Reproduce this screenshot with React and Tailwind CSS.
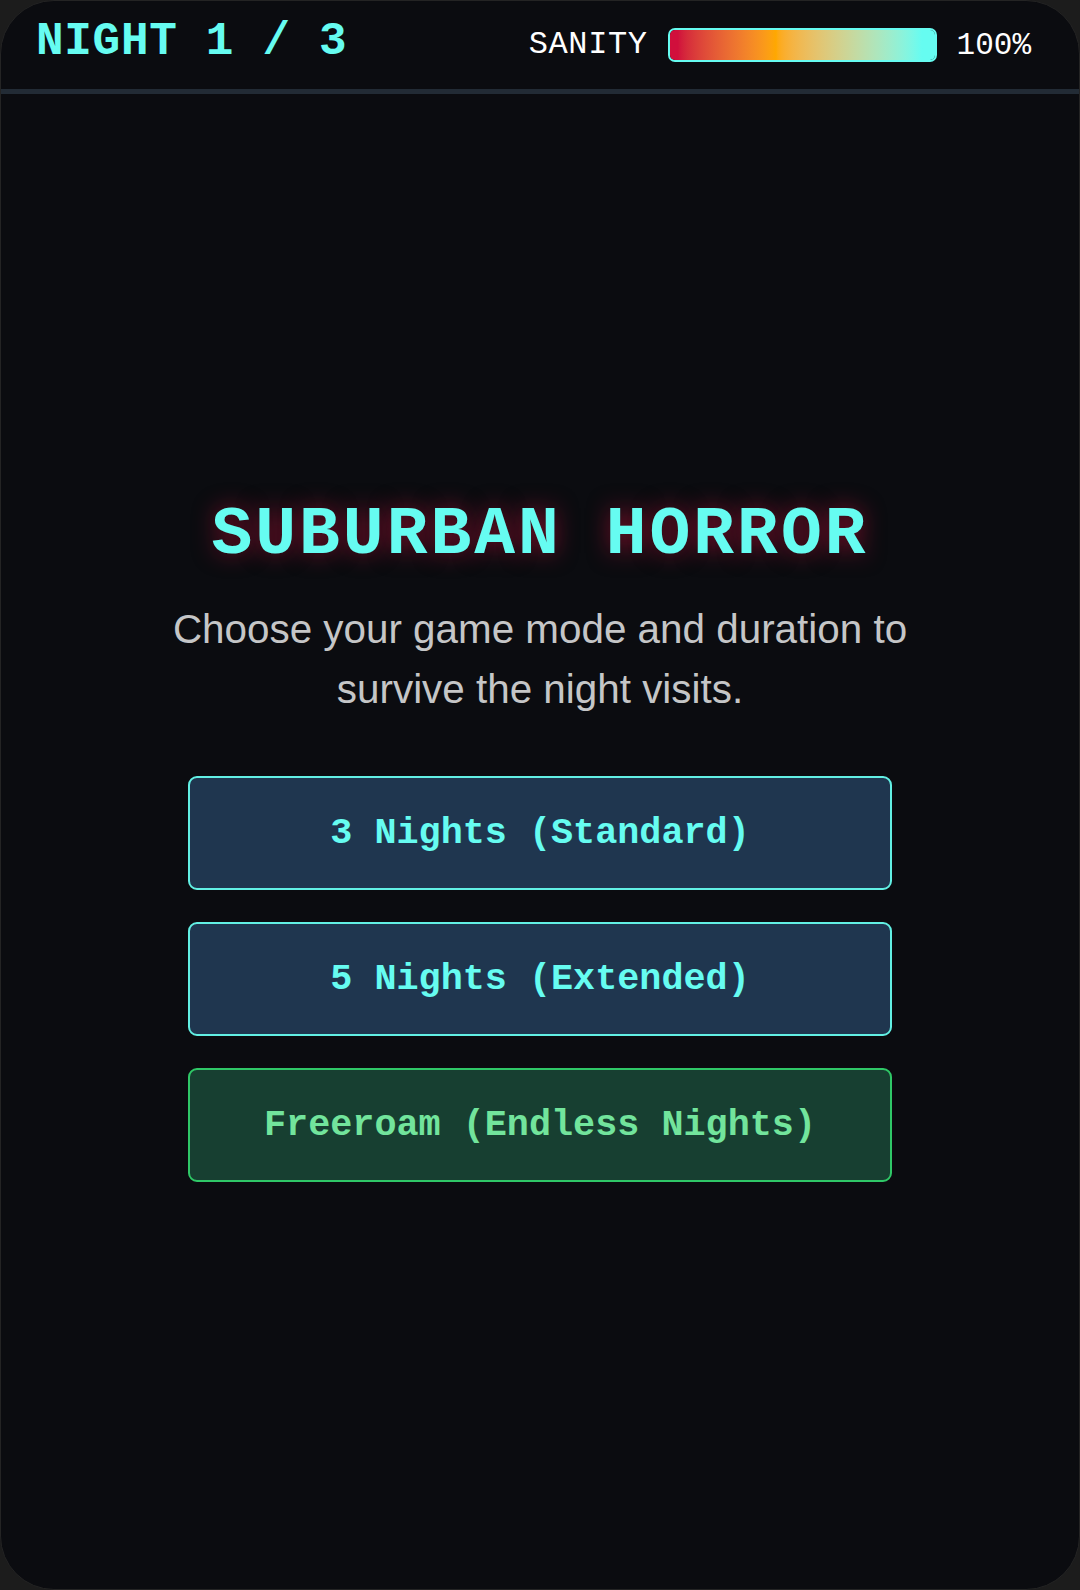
import React from "react";

const mono = { fontFamily: '"Liberation Mono", "DejaVu Sans Mono", monospace' };

function ModeButton({ label, variant }) {
  const cls =
    variant === "green"
      ? "bg-[#173f31] border-[#2fc867] text-[#72e49c]"
      : "bg-[#1f364f] border-[#62f0e4] text-[#66fcf1]";
  return (
    <button
      className={`w-[704px] h-[114px] rounded-[9px] border-[2.5px] flex items-center justify-center font-bold text-[36.8px] leading-none ${cls}`}
      style={mono}
    >
      {label}
    </button>
  );
}

export default function App() {
  return (
    <div className="w-[1080px] h-[1590px] bg-[#1c1c1c]">
      <div className="w-full h-full rounded-[54px] bg-[#0b0c10] border border-[#242424] overflow-hidden flex flex-col">
        <header className="h-[88px] flex items-center justify-between pl-[35px] pr-[48px] shrink-0">
          <div
            className="text-[46px] font-bold leading-none tracking-[0.7px] text-[#66fcf1] mb-[7px]"
            style={mono}
          >
            NIGHT 1 / 3
          </div>
          <div className="flex items-center gap-[20px]" style={mono}>
            <span className="text-[32px] leading-none text-white tracking-[0.6px]">SANITY</span>
            <div className="w-[269px] h-[34px] rounded-[7px] border-2 border-[#66fcf1] bg-[#66fcf1] overflow-hidden">
              <div className="w-full h-full bg-linear-to-r from-[#d10f3c] from-3% via-[#ffa800] via-40% to-[#66fcf1] to-95%" />
            </div>
            <span className="text-[31px] leading-none text-white">100%</span>
          </div>
        </header>
        <div className="h-[5px] bg-[#222b35] shrink-0" />
        <main className="flex-1 flex flex-col items-center justify-center">
          <h1
            className="text-[68px] font-bold leading-none tracking-[3px] text-[#66fcf1] [text-shadow:0_0_22px_rgba(200,16,60,0.6)]"
            style={mono}
          >
            SUBURBAN HORROR
          </h1>
          <p
            className="mt-[30px] w-[790px] text-center text-[40.4px] leading-[60px] text-[#c5c6c7]"
            style={{ fontFamily: '"Liberation Sans", Arial, sans-serif' }}
          >
            Choose your game mode and duration to survive the night visits.
          </p>
          <div className="mt-[57px] flex flex-col gap-[32px]">
            <ModeButton label="3 Nights (Standard)" />
            <ModeButton label="5 Nights (Extended)" />
            <ModeButton label="Freeroam (Endless Nights)" variant="green" />
          </div>
        </main>
      </div>
    </div>
  );
}
